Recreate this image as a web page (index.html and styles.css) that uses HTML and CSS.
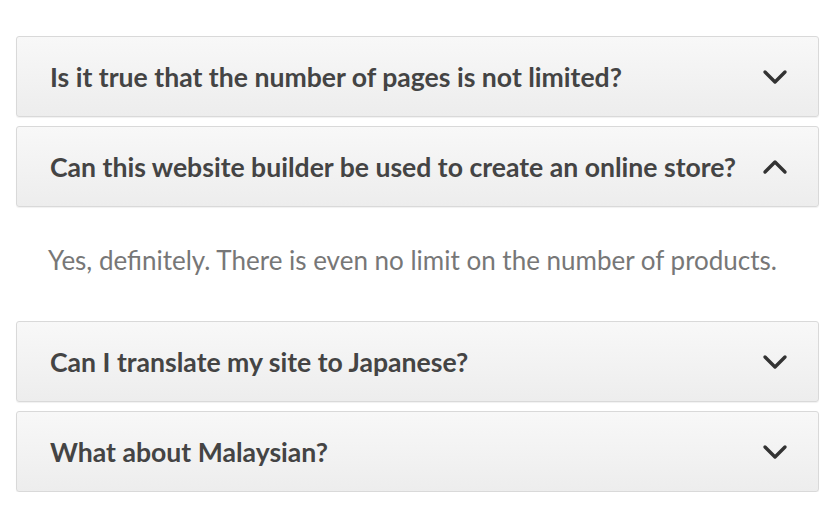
FILE: index.html
```html
<!DOCTYPE html>
<html>
<head>
<meta charset="utf-8">
<link rel="stylesheet" href="styles.css">
</head>
<body>
<div class="faq">
  <div class="item">
    <div class="q"><span class="qt">Is it true that the number of pages is not limited?</span>
      <svg class="chev" width="26" height="16" viewBox="0 0 26 16"><polyline points="3,3 13,13 23,3" fill="none" stroke="#333" stroke-width="3.4" stroke-linecap="round" stroke-linejoin="round"/></svg></div>
  </div>
  <div class="item open">
    <div class="q"><span class="qt">Can this website builder be used to create an online store?</span>
      <svg class="chev" width="26" height="16" viewBox="0 0 26 16"><polyline points="3,13 13,3 23,13" fill="none" stroke="#333" stroke-width="3.4" stroke-linecap="round" stroke-linejoin="round"/></svg></div>
    <div class="a">Yes, definitely. There is even no limit on the number of products.</div>
  </div>
  <div class="item">
    <div class="q"><span class="qt">Can I translate my site to Japanese?</span>
      <svg class="chev" width="26" height="16" viewBox="0 0 26 16"><polyline points="3,3 13,13 23,3" fill="none" stroke="#333" stroke-width="3.4" stroke-linecap="round" stroke-linejoin="round"/></svg></div>
  </div>
  <div class="item">
    <div class="q"><span class="qt">What about Malaysian?</span>
      <svg class="chev" width="26" height="16" viewBox="0 0 26 16"><polyline points="3,3 13,13 23,3" fill="none" stroke="#333" stroke-width="3.4" stroke-linecap="round" stroke-linejoin="round"/></svg></div>
  </div>
</div>
</body>
</html>
```
FILE: styles.css
```css
html, body { margin: 0; padding: 0; background: #fff; }
body { font-family: Lato, "Open Sans", sans-serif; }
.faq {
  padding: 36px 21px 0 16px;
  display: flex;
  flex-direction: column;
  gap: 9px;
}
.q {
  height: 79px;
  border: 1px solid #d9d9d9;
  border-radius: 3px;
  background: linear-gradient(#f8f8f8, #ededed);
  box-shadow: 0 1px 1px rgba(0,0,0,0.06);
  display: flex;
  align-items: center;
  justify-content: space-between;
  padding: 0 30px 0 33px;
}
.qt {
  font-weight: 700;
  font-size: 26.6px;
  color: #444;
}
.chev { display: block; }
.a {
  font-size: 26px;
  color: #777;
  padding: 38px 0 37px 32px;
  line-height: 30px;
}
```
